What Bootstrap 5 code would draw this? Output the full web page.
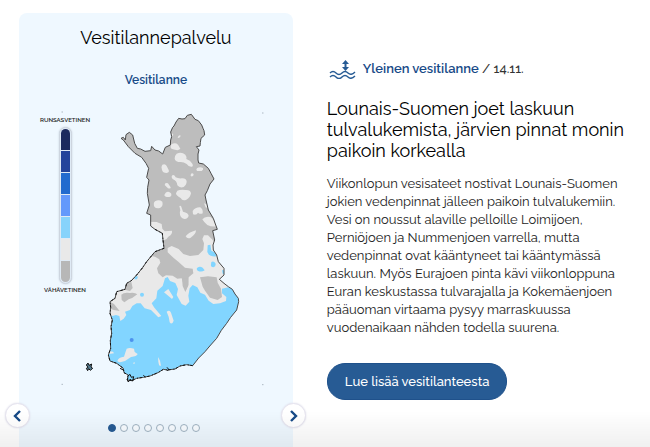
<!DOCTYPE html>
<html lang="fi">
<head>
<meta charset="utf-8">
<meta name="viewport" content="width=device-width, initial-scale=1">
<title>Vesitilannepalvelu</title>
<link href="https://cdn.jsdelivr.net/npm/bootstrap@5.3.0/dist/css/bootstrap.min.css" rel="stylesheet">
<style>
  :root { --navy: #174a87; --blue: #275b94; --ice: #eff8ff; }
  body { font-family: Raleway, Lato, "Open Sans", sans-serif; color: #000; background: #fff; }
  .page-grid { display: grid; grid-template-columns: minmax(0, 10fr) minmax(0, 11fr); gap: 34px; min-height: 100vh; padding: 13px 22px 0 19px; }
  .service { background: var(--ice); border-radius: 8px 8px 0 0; padding: 12px 20px 14px; }
  .service-title { font-size: 18px; line-height: 26px; font-weight: 400; }
  .slide-title { font-size: 12px; line-height: 18px; font-weight: 600; color: var(--navy); margin-top: 20px; }
  .map-figure { display: grid; margin: 21px 0 0; }
  .map-figure > * { grid-area: 1 / 1; }
  .map-svg { width: 205px; height: 277px; justify-self: center; margin-left: 14px; }
  .legend { justify-self: start; width: 52px; font-size: 6px; line-height: 8px; font-weight: 600; color: #222; padding-top: 6px; z-index: 1; }
  .legend-bar { display: grid; gap: 1px; width: 13px; padding: 1px; margin: 3px auto 2px; border-radius: 7px; background: #dfeaf5; border: 1px solid #cdd5df; overflow: hidden; box-shadow: 0 0 2px #c3ccd7; }
  .legend-bar i { height: 21px; }
  .legend-bar i:first-child { border-radius: 5px 5px 0 0; }
  .legend-bar i:last-child { border-radius: 0 0 5px 5px; }
  .s1 { background: #1b2a5e; } .s2 { background: #23449b; } .s3 { background: #226bce; } .s4 { background: #6399fb; }
  .s5 { background: #87d3fb; } .s6 { background: #e9e9e9; } .s7 { background: #b7b7b7; }
  .pager { gap: 4px; margin-top: 37px; margin-right: 3px; }
  .pager button { width: 8px; height: 8px; padding: 0; border: 1px solid #9fb3c2; border-radius: 50%; background: #f7fbff; }
  .pager .current { background: var(--blue); border-color: var(--blue); }
  .arrow-btn { bottom: 19px; width: 25px; height: 25px; border: 1px solid #e6e4ef; border-radius: 50%; background: #fff; padding: 0; box-shadow: 0 0 2px #dcdce8; }
  .arrow-prev { left: -14px; } .arrow-next { right: -13px; }
  .news { padding-top: 45px; }
  .news-meta { font-size: 13px; line-height: 22px; font-weight: 500; color: #333; gap: 7px; }
  .news-meta a { color: var(--navy); text-decoration: none; font-weight: 600; }
  .news-title { font-size: 18px; line-height: 21px; font-weight: 400; margin: 18px 0 14px; }
  .news-text { font-size: 13px; line-height: 18px; color: #1c1c1c; margin: 0 0 26px; }
  .news-btn { font-size: 13px; line-height: 19px; font-weight: 500; padding: 8px 17px; border-radius: 18px; color: #fff; background: var(--blue); border: 1px solid #1f518b; }
  .news-btn:hover { background: var(--navy); color: #fff; }
  .bottom-fade { height: 36px; pointer-events: none; background: linear-gradient(rgba(0,0,0,0), rgba(0,0,0,.06)); }
</style>
<script src="https://cdn.jsdelivr.net/npm/bootstrap@5.3.0/dist/js/bootstrap.bundle.min.js"></script>
</head>
<body>
<main class="page-grid">
  <section class="service position-relative d-flex flex-column text-center">
    <h1 class="service-title mb-0">Vesitilannepalvelu</h1>
    <h2 class="slide-title mb-0">Vesitilanne</h2>
    <figure class="map-figure">
      <div class="legend">
        <div>RUNSASVETINEN</div>
        <div class="legend-bar"><i class="s1"></i><i class="s2"></i><i class="s3"></i><i class="s4"></i><i class="s5"></i><i class="s6"></i><i class="s7"></i></div>
        <div>VÄHÄVETINEN</div>
      </div>
      <svg class="map-svg" viewBox="180 330 615 831" role="img" aria-label="Suomen kartta">
        <defs>
          <path id="coast" d="M363 415L370 412 376 420 378 404 388 397 398 405 404 430 412 445 422 447 435 454 452 452 455 439 465 450 476 453 488 462 496 442 511 435 512 420 515 410 512 396 518 382 522 378 528 366 536 355 546 357 555 356 562 346 574 343 585 358 595 362 605 375 609 385 612 392 614 405 603 415 601 428 600 438 589 440 597 450 594 462 594 480 596 489 610 492 625 505 633 520 642 537 630 552 622 572 615 585 618 600 625 630 640 655 646 672 652 688 638 692 644 720 639 735 640 750 650 765 655 785 672 805 672 825 658 838 672 850 685 860 697 868 705 882 715 895 716 905 710 930 692 952 680 970 664 991 650 1015 632 1035 615 1055 596 1074 578 1097 560 1094 540 1098 525 1107 502 1110 490 1108 474 1118 450 1128 430 1132 410 1135 395 1142 382 1140 385 1125 372 1118 370 1105 350 1090 330 1083 325 1065 332 1045 331 1022 335 1000 333 980 337 960 330 940 332 922 330 905 345 895 350 875 375 868 380 850 394 842 410 825 427 804 440 785 465 755 492 745 489 720 487 700 465 688 452 678 452 645 440 640 448 615 442 580 443 562 447 540 440 532 446 505 438 490 425 472 405 460 385 440 370 420Z"/>
          <clipPath id="land"><use href="#coast"/></clipPath>
        </defs>
        <use href="#coast" fill="#bdbdbd"/>
        <g clip-path="url(#land)">
          <g fill="#e9e9e9" transform="translate(300 300)">
            <path d="M215 100l5 2-3 8h-6zM235 108q6-4 7 0-3 7-9 6zM214 133q12-7 20 1l7 12q-6 7-16 3-14-1-13-8 0-4 2-8zM230 161q15-6 26 3 5 6 3 13 12 4 18 14 4 8-2 9-9 1-15-8-8-6-18-6-16 0-18-10 0-10 6-15zM187 194q9-4 13 4l6 12q3 7-6 9-12 0-14-9-4-10 1-16zM291 205q8-6 18-1 2 6-4 9h-14q-4-4 0-8zM275 220q6-1 6 5-4 7-9 3-1-5 3-8zM217 226q5-4 10 6 8 4 18 3 13-1 15 9 0 11-9 17-12 4-19-5-1-13-13-18-7-7-2-12zM196 250q7-3 10 3l6 9q1 5-8 3l-10-10zM197 278q9-6 16 2 4 9-5 11-14 1-15-6zM232 272q10-4 24-2 16-1 17 10-2 13-14 19-12 5-17-5-14-7-14-14z"/>
          </g>
          <g fill="#e9e9e9" transform="translate(300 570)">
            <path d="M165 34q12-7 22 1 3 13-6 18-11 5-18-3-4-10 2-16zM238 48q4-3 6 2l5 15q16 3 17 12-2 9-12 10-12-3-14-13-2-7 1-13zM278 63q8-12 23-11 9 6 7 18-6 4-14-2-5 9-15 5zM312 40l15 6 2 12-12-6zM307 88q8-11 25-7l20 20v8q-18 2-30-4-10-8-15-17zM257 139q8-12 31-18 0 12-16 22-10 5-15-4zM140 95l30 1 15 6 2 14 7 8 22-2q2 10-11 18-7 13-16 10l-8-26-20-8z"/>
            <path d="M120 190L165 200 178 208 181 218 171 235 175 250 188 262 198 256 218 257 232 266 245 265 252 285 257 302 265 285 266 262 280 250 278 236 255 233 235 215 222 205 203 187 203 174 215 168 236 177 250 192 270 198 295 195 310 180 312 160 307 147 312 136 324 136 336 148 345 160 420 260 430 360 420 600H10V250z"/>
          </g>
          <g transform="translate(240 840)">
            <g fill="#bdbdbd">
              <path d="M360-8l24-3 26 3 3 16 10 18 3 25-13 9-23-7-15-21-7-12zM306-4h18l1 20-9 20-8-18zM124 44q8-8 26-5 15-2 22 4-14 12-26 15l-13 9-8-7zM86 63l16 9 17 21q-19-2-33-9zM138 10l16-4 4 18-8 9-17-4z"/>
            </g>
            <path fill="#82d5ff" d="M80 100L97 108 108 105 118 108 121 123 131 116 139 105 135 95 150 90 157 78 170 70 182 70 194 85 213 90 235 112 244 108 222 82 215 70 229 55 232 32 248 18 255-5 263-9 270 3 286 9 294 27 290 45 305 72 317 77 328 65 325 47 329 25 338 15 352 22 361 38 375 44 386 62 400 72 420 70 438 63 439 51 426 40 426 26 445 22 500 45V330H60z"/>
            <g fill="#e9e9e9">
              <path d="M252 37l13-10 15 24-4 6zM260 95q9-7 13 3l8 24q-5 14-12 5-1-16-9-32zM140 206q9-4 22 0l2 10 9 6q-2 7-20 9l-18 12q-19 7-23 0 4-12 20-13 5-16 8-24zM234 231l6 11 3 15q-6 3-8-12zM158 249l7-2-2 5zM82 213l17 2 3 5-15 2z"/>
            </g>
            <circle cx="186" cy="44" r="6" fill="#82d5ff"/>
            <circle cx="155" cy="180" r="6" fill="#4d92ee"/>
          </g>
          <path fill="#82d5ff" transform="translate(300 570)" d="M106 257l8 3-3 8h-8zM292 233q8-5 16 0l6 8q-10 7-21 1-5-5-1-9zM334 216q8-4 13 5 1 9-7 11-9-1-7-9zM323 166l8-2 3 18 15 8v9q-23 2-27-13zM366 240l10 2v12l-8-3z"/>
        </g>
        <use href="#coast" fill="none" stroke="#4b4b4b" stroke-width="3"/>
        <g fill="none" stroke="#111" stroke-linejoin="bevel">
          <path stroke-width="3" stroke-dasharray="7 5 3 8" d="M578 1097L560 1094 540 1098 525 1107 502 1110 490 1108 474 1118 450 1128 430 1132 410 1135 395 1142 382 1140 385 1125 372 1118 370 1105 350 1090 330 1083 325 1065 332 1045 331 1022 335 1000 333 980 337 960 330 940 332 922 330 905 345 895 350 875 375 868 380 850 394 842 410 825 427 804 440 785 465 755 492 745 489 720 487 700 465 688"/>
          <path stroke-width="3" d="M382 1130l8-7 4 9 7-2-3 13-8-5-5 8-4-9M501 1102l5 6-4 5M430 1126l6 5M360 1105l12 6"/>
          <path stroke-width="3" fill="#52798e" d="M259 1095l5-6 3 7 8-4-2 9 5 4-7 6-5-5-3 6-4-7 5-3z"/>
        </g>
        <path stroke="#8e9aa5" stroke-width="3" d="M185 336h3M787 339h3M185 1153h3M787 1154h3"/>
      </svg>
    </figure>
    <div class="pager d-flex justify-content-center">
      <button class="current" aria-label="Kuva 1"></button><button aria-label="Kuva 2"></button><button aria-label="Kuva 3"></button><button aria-label="Kuva 4"></button><button aria-label="Kuva 5"></button><button aria-label="Kuva 6"></button><button aria-label="Kuva 7"></button><button aria-label="Kuva 8"></button>
    </div>
    <button class="arrow-btn arrow-prev position-absolute d-flex align-items-center justify-content-center" aria-label="Edellinen">
      <svg width="10" height="12" viewBox="0 0 10 12" fill="none" stroke="#174a87" stroke-width="2.4"><path d="M7 1L2 6l5 5"/></svg>
    </button>
    <button class="arrow-btn arrow-next position-absolute d-flex align-items-center justify-content-center" aria-label="Seuraava">
      <svg width="10" height="12" viewBox="0 0 10 12" fill="none" stroke="#174a87" stroke-width="2.4"><path d="M3 1l5 5-5 5"/></svg>
    </button>
  </section>
  <article class="news">
    <div class="news-meta d-flex align-items-center">
      <svg width="29" height="20" viewBox="0 0 29 20" fill="none" stroke="#275b94" stroke-width="1.400">
        <path d="M3 14q3-3 6 0t6 0 6 0 7-1M3 18q3-3 6 0t6 0 6 0 7-1"/>
        <path stroke-width="2" d="M18.500 3v7"/><path fill="#275b94" stroke="none" d="M18.500 1l3.500 4h-7zM18.500 12l3.500-4h-7z"/>
      </svg>
      <span><a href="#">Yleinen vesitilanne</a> / 14.11.</span>
    </div>
    <h2 class="news-title">Lounais-Suomen joet laskuun tulvalukemista, järvien pinnat monin paikoin korkealla</h2>
    <p class="news-text">Viikonlopun vesisateet nostivat Lounais-Suomen jokien vedenpinnat jälleen paikoin tulvalukemiin. Vesi on noussut alaville pelloille Loimijoen, Perniöjoen ja Nummenjoen varrella, mutta vedenpinnat ovat kääntyneet tai kääntymässä laskuun. Myös Eurajoen pinta kävi viikonloppuna Euran keskustassa tulvarajalla ja Kokemäenjoen pääuoman virtaama pysyy marraskuussa vuodenaikaan nähden todella suurena.</p>
    <a class="btn news-btn" href="#">Lue lisää vesitilanteesta</a>
  </article>
</main>
<div class="bottom-fade fixed-bottom"></div>
</body>
</html>
